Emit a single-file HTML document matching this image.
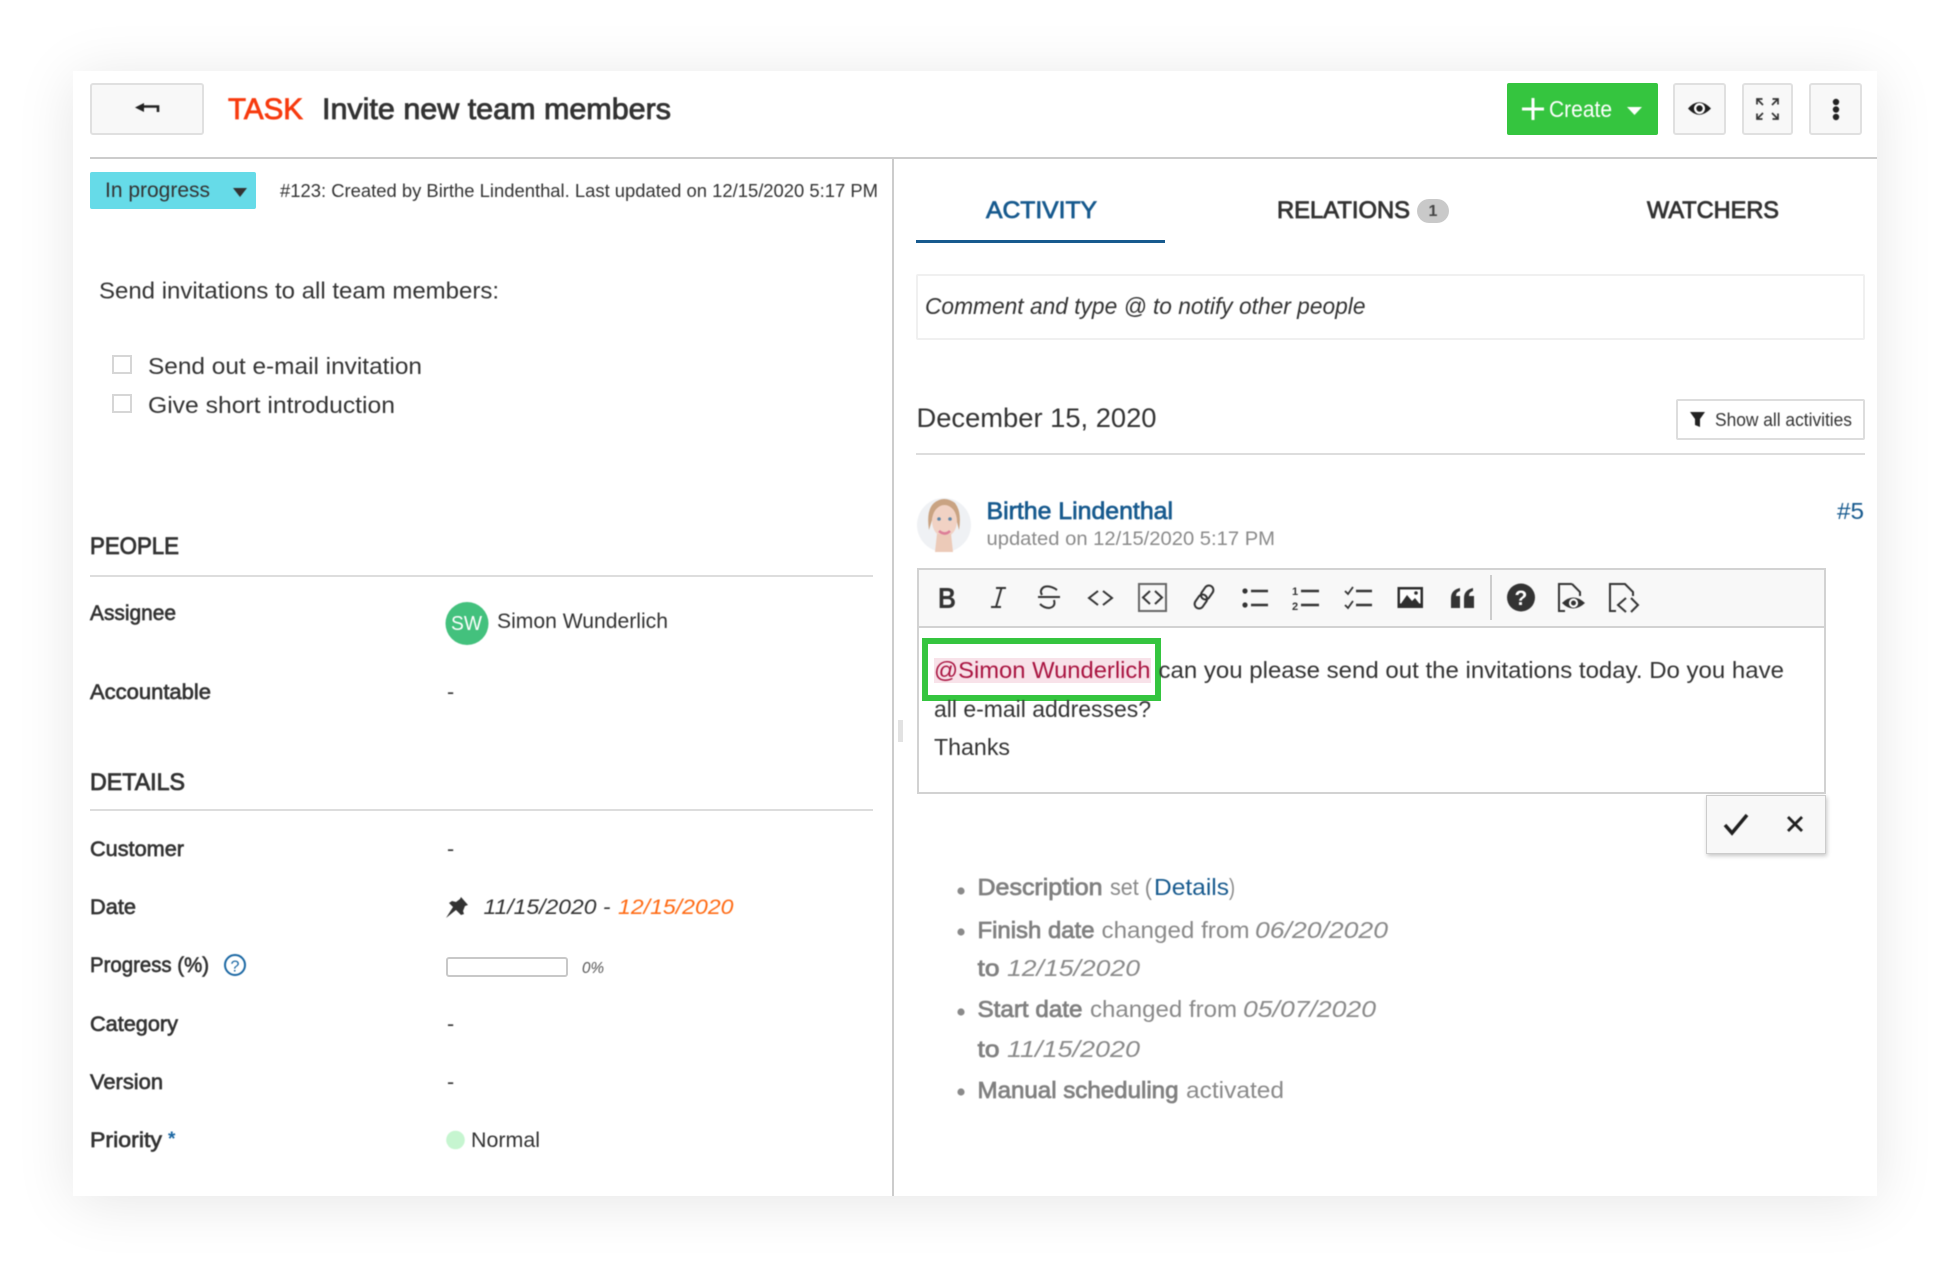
<!DOCTYPE html>
<html lang="en">
<head>
<meta charset="utf-8">
<title>Invite new team members</title>
<style>
html,body{margin:0;padding:0;background:#fff;width:1950px;height:1271px;overflow:hidden}
body{position:relative;font-family:"Liberation Sans",sans-serif}
.b{position:absolute;box-sizing:border-box}
.card{left:73px;top:71px;width:1804px;height:1125px;background:#fff;box-shadow:0 6px 55px rgba(0,0,0,.10)}
.btn{background:#f8f8f8;border:2px solid #e0e0e0;border-radius:3px;top:83px;height:52px}
svg{position:absolute;left:0;top:0;filter:blur(.45px)}
text{font-family:"Liberation Sans",sans-serif;fill:#333}
.m{stroke:#333;stroke-width:.65px}
.h{stroke:#333;stroke-width:.85px}
.g{fill:#8a8a8a}
.gm{fill:#808080;stroke:#808080;stroke-width:.75px}
.bl{fill:#175a8e}
.i{font-style:italic}
</style>
</head>
<body>
<div class="b card"></div>
<div class="b btn" style="left:90px;width:114px"></div>
<div class="b" style="left:1507px;top:83px;width:151px;height:52px;background:#35c53f;border-radius:2px"></div>
<div class="b btn" style="left:1673px;width:53px"></div>
<div class="b btn" style="left:1742px;width:51px"></div>
<div class="b btn" style="left:1809px;width:53px"></div>
<div class="b" style="left:90px;top:157px;width:1787px;height:2px;background:#ccc"></div>
<div class="b" style="left:892px;top:158px;width:2px;height:1038px;background:#ccc"></div>
<div class="b" style="left:90px;top:172px;width:166px;height:37px;background:#66dbe8;border-radius:2px"></div>
<div class="b" style="left:112px;top:355px;width:20px;height:19px;border:2px solid #d6d6d6"></div>
<div class="b" style="left:112px;top:394px;width:20px;height:19px;border:2px solid #d6d6d6"></div>
<div class="b" style="left:90px;top:575px;width:783px;height:2px;background:#ddd"></div>
<div class="b" style="left:90px;top:809px;width:783px;height:2px;background:#ddd"></div>
<div class="b" style="left:446px;top:957px;width:122px;height:20px;border:2px solid #c8c8c8;border-radius:3px;background:#fff"></div>
<div class="b" style="left:898px;top:720px;width:5px;height:22px;background:#e2e2e2"></div>
<div class="b" style="left:916px;top:240px;width:249px;height:3px;background:#175a8e"></div>
<div class="b" style="left:1417px;top:199px;width:32px;height:24px;border-radius:12px;background:#c9c9c9"></div>
<div class="b" style="left:916px;top:274px;width:949px;height:66px;border:2px solid #f0f0f0;border-radius:2px"></div>
<div class="b" style="left:1676px;top:399px;width:189px;height:41px;border:2px solid #ddd;border-radius:2px;background:#fff"></div>
<div class="b" style="left:916px;top:453px;width:949px;height:2px;background:#ddd"></div>
<div class="b" style="left:917px;top:568px;width:909px;height:226px;border:2px solid #d2d2d2;background:#fff"></div>
<div class="b" style="left:919px;top:570px;width:905px;height:58px;background:#f8f8f8;border-bottom:2px solid #d2d2d2"></div>
<div class="b" style="left:1490px;top:575px;width:2px;height:45px;background:#ccc"></div>
<div class="b" style="left:934px;top:658px;width:217px;height:25px;background:#f8e2e9"></div>
<div class="b" style="left:922px;top:638px;width:239px;height:63px;border:6px solid #35c53f"></div>
<div class="b" style="left:1706px;top:795px;width:120px;height:59px;background:#f8f8f8;border:1px solid #ccc;box-shadow:1px 2px 4px rgba(0,0,0,.22)"></div>

<svg width="1950" height="1271" viewBox="0 0 1950 1271" xmlns="http://www.w3.org/2000/svg">
<!-- header -->
<path d="M135 107.5L144 103V112Z" fill="#222"/><path d="M143 106.5H158V112" fill="none" stroke="#222" stroke-width="2.6"/>
<text x="228" y="119" font-size="30" textLength="75" lengthAdjust="spacingAndGlyphs" style="fill:#f73a0e;stroke:#f73a0e;stroke-width:.8px">TASK</text>
<text x="322" y="119" font-size="30" textLength="349" lengthAdjust="spacingAndGlyphs" class="h">Invite new team members</text>
<path d="M1522 109H1544M1533 98V120" stroke="#fff" stroke-width="3" fill="none"/>
<text x="1549" y="117" font-size="23" textLength="63" lengthAdjust="spacingAndGlyphs" style="fill:#fff">Create</text>
<path d="M1627 107H1642L1634.5 115Z" fill="#fff"/>
<path d="M1688 108.500Q1699 96 1711 108.500Q1699 121 1688 108.500Z" fill="#1d1d1d"/><circle cx="1699.500" cy="108.500" r="5.500" fill="#fff"/><circle cx="1699.500" cy="108.500" r="3.200" fill="#1d1d1d"/>
<path d="M1757 104.500V99H1762.500M1757 99L1763 105M1778 104.500V99H1772.500M1778 99L1772 105M1757 113.500V119H1762.500M1757 119L1763 113M1778 113.500V119H1772.500M1778 119L1772 113" fill="none" stroke="#333" stroke-width="1.700"/>
<circle cx="1836" cy="102" r="3.200" fill="#222"/><circle cx="1836" cy="109.500" r="3.200" fill="#222"/><circle cx="1836" cy="117" r="3.200" fill="#222"/>
<!-- left panel -->
<text x="105" y="197" font-size="21.500" textLength="105" lengthAdjust="spacingAndGlyphs">In progress</text>
<path d="M233 188H247L240 197Z" fill="#333"/>
<text x="280" y="197" font-size="18.500" textLength="598" lengthAdjust="spacingAndGlyphs">#123: Created by Birthe Lindenthal. Last updated on 12/15/2020 5:17 PM</text>
<text x="99" y="298.500" font-size="23.500" textLength="400" lengthAdjust="spacingAndGlyphs">Send invitations to all team members:</text>
<text x="148" y="374" font-size="23.500" textLength="274" lengthAdjust="spacingAndGlyphs">Send out e-mail invitation</text>
<text x="148" y="413" font-size="23.500" textLength="247" lengthAdjust="spacingAndGlyphs">Give short introduction</text>
<text x="90" y="554" font-size="24" textLength="89" lengthAdjust="spacingAndGlyphs" class="h">PEOPLE</text>
<text x="90" y="620" font-size="21.500" textLength="86" lengthAdjust="spacingAndGlyphs" class="m">Assignee</text>
<circle cx="467" cy="623.500" r="21.500" fill="#43c17d"/>
<text x="451" y="630" font-size="20" textLength="31" lengthAdjust="spacingAndGlyphs" style="fill:#fff">SW</text>
<text x="497" y="628" font-size="21.500" textLength="171" lengthAdjust="spacingAndGlyphs">Simon Wunderlich</text>
<text x="90" y="699" font-size="21.500" textLength="121" lengthAdjust="spacingAndGlyphs" class="m">Accountable</text>
<text x="447" y="699" font-size="21.500">-</text>
<text x="90" y="790" font-size="24" textLength="95" lengthAdjust="spacingAndGlyphs" class="h">DETAILS</text>
<text x="90" y="856" font-size="21.500" textLength="94" lengthAdjust="spacingAndGlyphs" class="m">Customer</text>
<text x="447" y="856" font-size="21.500">-</text>
<text x="90" y="914" font-size="21.500" textLength="46" lengthAdjust="spacingAndGlyphs" class="m">Date</text>
<path d="M461 897L468 905L465 906L463 911L464 914L461 915L456 910L446 918L453 907L449 903L452 901L456 902L460 899Z" fill="#333"/>
<text x="483.500" y="914" font-size="21.500" textLength="127" lengthAdjust="spacingAndGlyphs" class="i">11/15/2020 -</text>
<text x="618" y="914" font-size="21.500" textLength="115.500" lengthAdjust="spacingAndGlyphs" class="i" style="fill:#ff6a13">12/15/2020</text>
<text x="90" y="972" font-size="21.500" textLength="119" lengthAdjust="spacingAndGlyphs" class="m">Progress (%)</text>
<circle cx="235" cy="965" r="10" fill="none" stroke="#1a67a3" stroke-width="2"/>
<text x="230.500" y="971.500" font-size="16" textLength="9" lengthAdjust="spacingAndGlyphs" style="fill:#1a67a3">?</text>
<text x="582" y="973" font-size="16" textLength="22" lengthAdjust="spacingAndGlyphs" class="i" style="fill:#555">0%</text>
<text x="90" y="1031" font-size="21.500" textLength="88" lengthAdjust="spacingAndGlyphs" class="m">Category</text>
<text x="447" y="1031" font-size="21.500">-</text>
<text x="90" y="1089" font-size="21.500" textLength="73" lengthAdjust="spacingAndGlyphs" class="m">Version</text>
<text x="447" y="1089" font-size="21.500">-</text>
<text x="90" y="1147" font-size="21.500" textLength="72" lengthAdjust="spacingAndGlyphs" class="m">Priority</text>
<text x="168" y="1145" font-size="19" font-weight="bold" style="fill:#1a67a3">*</text>
<circle cx="455.500" cy="1140" r="9.300" fill="#c6f5d0"/>
<text x="471" y="1147" font-size="21.500" textLength="69" lengthAdjust="spacingAndGlyphs">Normal</text>
<!-- tabs -->
<text x="986" y="218" font-size="24.500" textLength="111" lengthAdjust="spacingAndGlyphs" style="fill:#175a8e;stroke:#175a8e;stroke-width:.8px">ACTIVITY</text>
<text x="1277" y="218" font-size="24.500" textLength="133" lengthAdjust="spacingAndGlyphs" class="h">RELATIONS</text>
<text x="1428.500" y="216" font-size="16" font-weight="bold" style="fill:#444">1</text>
<text x="1647" y="218" font-size="24.500" textLength="132" lengthAdjust="spacingAndGlyphs" class="h">WATCHERS</text>
<text x="925" y="314" font-size="23" textLength="440.500" lengthAdjust="spacingAndGlyphs" class="i">Comment and type @ to notify other people</text>
<text x="916.500" y="427" font-size="27" textLength="240" lengthAdjust="spacingAndGlyphs">December 15, 2020</text>
<path d="M1690 412H1705L1700 419V427L1695 425V419Z" fill="#222"/>
<text x="1715" y="426" font-size="18.500" textLength="137" lengthAdjust="spacingAndGlyphs">Show all activities</text>
<!-- avatar -->
<circle cx="944" cy="525" r="27" fill="#eff1f4"/>
<path d="M929 530Q926 510 934 503Q944 495 955 503Q962 512 959 530L956 518Q950 506 940 508Q933 512 932 520Z" fill="#c9a382"/>
<ellipse cx="944.500" cy="521" rx="12.500" ry="16" fill="#f1d2c4"/>
<path d="M937 534L935 552H953L951 534Z" fill="#eccab8"/>
<path d="M939 531Q945 536 950 531" stroke="#dd7f98" stroke-width="2.600" fill="none"/>
<circle cx="939" cy="519" r="1.800" fill="#5f86a8"/><circle cx="950" cy="519" r="1.800" fill="#5f86a8"/>
<text x="986.500" y="519" font-size="24" textLength="186.500" lengthAdjust="spacingAndGlyphs" style="fill:#175a8e;stroke:#175a8e;stroke-width:.7px">Birthe Lindenthal</text>
<text x="986.500" y="545" font-size="19.500" textLength="288.500" lengthAdjust="spacingAndGlyphs" class="g">updated on 12/15/2020 5:17 PM</text>
<text x="1837" y="519" font-size="23" textLength="27" lengthAdjust="spacingAndGlyphs" class="bl">#5</text>
<!-- toolbar -->
<g fill="none" stroke="#333" stroke-width="2">
<path d="M996 588H1006M1001.500 588L996 607M991 607H1001"/>
<path d="M1057 590Q1050 585 1044 587Q1039 590 1042 595M1038 597H1060M1054 600Q1056 607 1049 608Q1044 608 1040 604"/>
<path d="M1098 591L1089 598L1098 605M1103 591L1112 598L1103 605"/>
<rect x="1139" y="584" width="27" height="27" stroke="#666"/>
<path d="M1150 591L1143 597.500L1150 604M1155 591L1162 597.500L1155 604"/>
<g transform="rotate(35 1204 597)"><rect x="1199.500" y="584" width="9" height="15" rx="4.500"/><rect x="1199.500" y="595" width="9" height="15" rx="4.500"/></g>
<path d="M1251 591H1268M1251 605H1268M1301 591H1319M1301 605H1319M1356 591H1372M1356 605H1372" stroke-width="2.400"/>
<path d="M1345 591L1348 594L1353 587M1345 605L1348 608L1353 601" stroke-width="1.800"/>
<path d="M1572 584H1559V611H1565M1572 584L1580 592V596"/>
<path d="M1616 611H1610V584H1625L1633 592V596M1626 598L1618 605L1626 612M1631 598L1638 605L1631 612"/>
</g>
<text x="938" y="608" font-size="29" font-weight="bold" textLength="18" lengthAdjust="spacingAndGlyphs">B</text>
<circle cx="1245" cy="591" r="2.600" fill="#333"/><circle cx="1245" cy="605" r="2.600" fill="#333"/>
<text x="1292" y="595" font-size="11" font-weight="bold">1</text><text x="1292" y="610" font-size="11" font-weight="bold">2</text>
<rect x="1397.500" y="587" width="25.500" height="21" fill="#2e2e2e"/>
<rect x="1400" y="589.500" width="20.500" height="14" fill="#fff"/>
<path d="M1400 605L1407 595L1412 601L1415 598L1420.500 605Z" fill="#2e2e2e"/><circle cx="1416" cy="593" r="1.800" fill="#2e2e2e"/>
<path d="M1451 598Q1451 590 1460 588V591Q1456 592 1456 596H1460V608H1451ZM1464 598Q1464 590 1473 588V591Q1469 592 1469 596H1474V608H1464Z" fill="#333"/>
<circle cx="1521" cy="597.500" r="14" fill="#333"/>
<text x="1514.500" y="605" font-size="21" font-weight="bold" style="fill:#fff">?</text>
<path d="M1562 603Q1573 592 1585 603Q1573 614 1562 603Z" fill="#333"/><circle cx="1573.500" cy="603" r="4.600" fill="#fff"/><circle cx="1573.500" cy="603" r="2.500" fill="#333"/>
<!-- editor text -->
<text x="934" y="678" font-size="23.500" textLength="216.500" lengthAdjust="spacingAndGlyphs" style="fill:#a8123f">@Simon Wunderlich</text>
<text x="1158.500" y="678" font-size="23.500" textLength="625.500" lengthAdjust="spacingAndGlyphs">can you please send out the invitations today. Do you have</text>
<text x="934" y="717" font-size="23.500" textLength="217" lengthAdjust="spacingAndGlyphs">all e-mail addresses?</text>
<text x="934" y="755" font-size="23.500" textLength="76" lengthAdjust="spacingAndGlyphs">Thanks</text>
<path d="M1725 825L1732 833L1747 815" fill="none" stroke="#1f1f1f" stroke-width="3.500"/>
<path d="M1788 817L1802 831M1802 817L1788 831" fill="none" stroke="#1f1f1f" stroke-width="2.800"/>
<!-- activity list -->
<g fill="#8a8a8a"><circle cx="961" cy="891" r="3.600"/><circle cx="961" cy="932" r="3.600"/><circle cx="961" cy="1012" r="3.600"/><circle cx="961" cy="1092" r="3.600"/></g>
<text x="977.500" y="895" font-size="23.500" textLength="125" lengthAdjust="spacingAndGlyphs" class="gm">Description</text>
<text x="1110" y="895" font-size="23.500" textLength="42" lengthAdjust="spacingAndGlyphs" class="g">set (</text>
<text x="1154" y="895" font-size="23.500" textLength="75" lengthAdjust="spacingAndGlyphs" class="bl">Details</text>
<text x="1229" y="895" font-size="23.500" textLength="6" lengthAdjust="spacingAndGlyphs" class="g">)</text>
<text x="977.500" y="938" font-size="23.500" textLength="117" lengthAdjust="spacingAndGlyphs" class="gm">Finish date</text>
<text x="1101.500" y="938" font-size="23.500" textLength="148" lengthAdjust="spacingAndGlyphs" class="g">changed from</text>
<text x="1255" y="938" font-size="23.500" textLength="133" lengthAdjust="spacingAndGlyphs" class="g i">06/20/2020</text>
<text x="977.500" y="976" font-size="23.500" textLength="22" lengthAdjust="spacingAndGlyphs" class="gm">to</text>
<text x="1007" y="976" font-size="23.500" textLength="133" lengthAdjust="spacingAndGlyphs" class="g i">12/15/2020</text>
<text x="977.500" y="1017" font-size="23.500" textLength="105" lengthAdjust="spacingAndGlyphs" class="gm">Start date</text>
<text x="1090" y="1017" font-size="23.500" textLength="147" lengthAdjust="spacingAndGlyphs" class="g">changed from</text>
<text x="1243" y="1017" font-size="23.500" textLength="133" lengthAdjust="spacingAndGlyphs" class="g i">05/07/2020</text>
<text x="977.500" y="1057" font-size="23.500" textLength="22" lengthAdjust="spacingAndGlyphs" class="gm">to</text>
<text x="1007" y="1057" font-size="23.500" textLength="133" lengthAdjust="spacingAndGlyphs" class="g i">11/15/2020</text>
<text x="977.500" y="1098" font-size="23.500" textLength="201" lengthAdjust="spacingAndGlyphs" class="gm">Manual scheduling</text>
<text x="1186" y="1098" font-size="23.500" textLength="98" lengthAdjust="spacingAndGlyphs" class="g">activated</text>
</svg>
</body>
</html>
